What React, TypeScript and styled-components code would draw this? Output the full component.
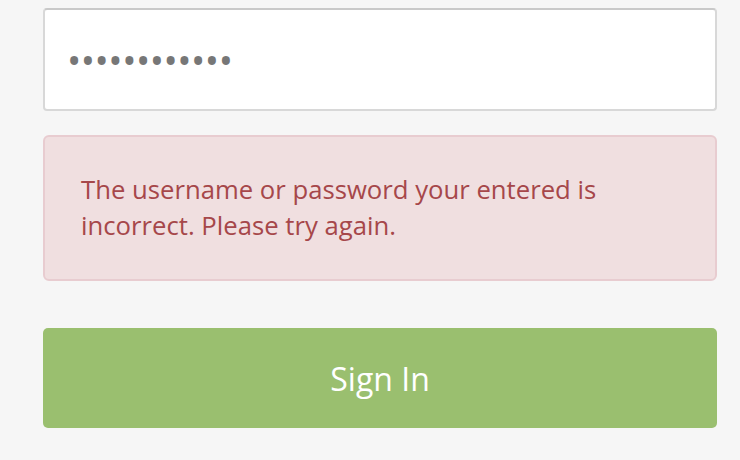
import React from "react";
import styled, { createGlobalStyle } from "styled-components";

const Global = createGlobalStyle`
  html, body { margin: 0; padding: 0; background: #f6f6f6; }
  body { font-family: "Open Sans", "Liberation Sans", sans-serif; }
  * { box-sizing: border-box; }
`;

const Page = styled.div`
  width: 740px;
  height: 460px;
  padding: 8px 23px 0 43px;
  display: flex;
  flex-direction: column;
  background: #f6f6f6;
`;

const PasswordInput = styled.input`
  width: 674px;
  height: 103px;
  border: 2px solid #d8d8d8;
  border-top-color: #c9c9c9;
  border-radius: 4px;
  background: #fff;
  padding: 0 22px;
  font-family: "Open Sans", sans-serif;
  font-size: 38px;
  letter-spacing: -0.5px;
  color: #777;
  outline: none;
`;

const Alert = styled.div`
  margin-top: 24px;
  width: 674px;
  height: 146px;
  border: 2px solid #e8ccd0;
  border-radius: 6px;
  background: #f0dfe0;
  color: #a6474a;
  padding: 35px 36px 0 36px;
  font-size: 25.7px;
  line-height: 36px;
`;

const SignInButton = styled.button`
  margin-top: 47px;
  width: 674px;
  height: 100px;
  border: none;
  border-radius: 5px;
  background: #9abf6f;
  color: #fff;
  font-family: "Open Sans", sans-serif;
  font-size: 32px;
  cursor: pointer;
`;

export default function App() {
  return (
    <>
      <Global />
      <Page>
        <PasswordInput type="password" defaultValue="123456789012" />
        <Alert>
          The username or password your entered is incorrect. Please try again.
        </Alert>
        <SignInButton>Sign In</SignInButton>
      </Page>
    </>
  );
}
